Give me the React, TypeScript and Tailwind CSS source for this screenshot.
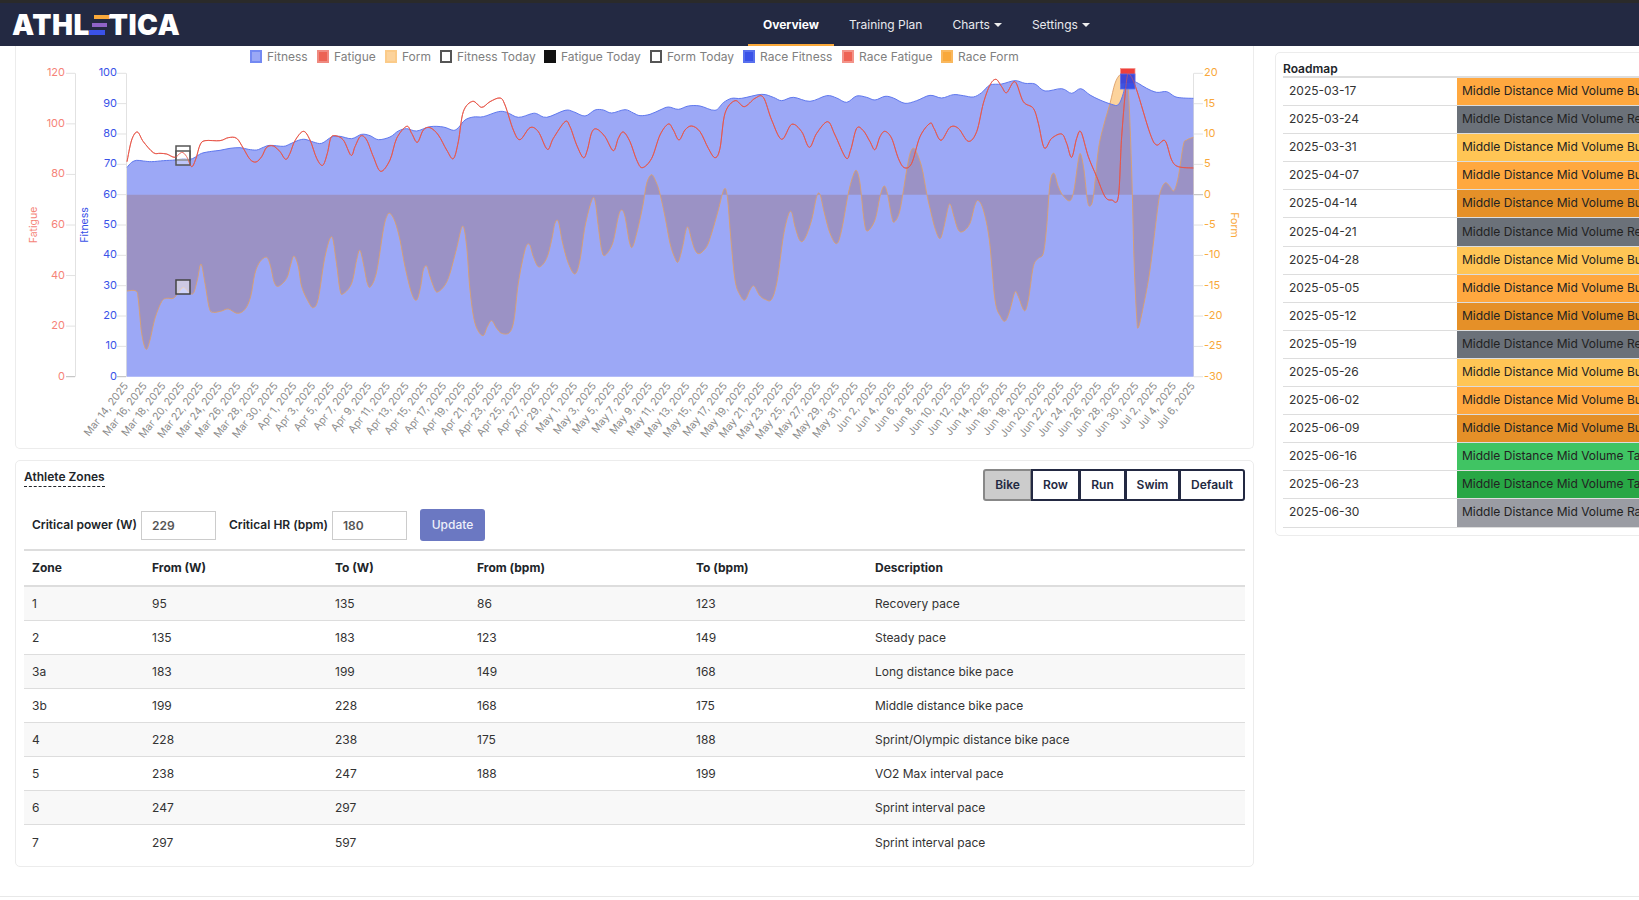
import React from 'react';

type Pt = [number, number];

const PLOT = { left: 126.8, right: 1193.4, top: 73.3, bottom: 376.7 };
const ZERO_Y = 194.7;

// traced per slice of the chart, 3x px from the slice origin
const fitnessSlices: [number, Pt[]][] = [
  [120, [[21,292],[35,277],[50,271],[70,273],[95,275],[130,272],[165,270],[190,266],[210,268],[225,262],[245,250],[275,244],[300,241],[330,235],[360,233],[385,238],[410,240],[430,232],[450,226],[490,229],[510,222],[535,211],[555,208],[580,216],[605,220],[635,201],[660,199],[695,206],[725,193],[750,197],[775,209],[810,201]]],
  [390, [[25,183],[50,176],[80,183],[120,170],[160,171],[190,181],[205,173],[225,150],[250,141],[280,140],[325,125],[350,127],[385,142],[425,131],[440,131],[470,142],[525,121],[550,125],[585,138],[615,120],[640,120],[665,129],[705,119],[730,129],[750,137],[780,133],[810,120]]],
  [660, [[25,111],[55,118],[85,108],[120,108],[165,121],[190,98],[215,85],[245,85],[305,73],[340,82],[365,92],[400,82],[450,94],[500,77],[530,84],[560,97],[590,78],[620,82],[645,90],[675,79],[700,84],[735,100],[770,92],[810,76]]],
  [930, [[35,84],[70,74],[100,77],[130,81],[155,68],[180,45],[215,42],[255,32],[285,40],[315,42],[345,63],[395,56],[425,70],[452,56],[480,75],[510,90],[545,103],[565,104],[580,70],[590,20],[600,28],[625,40],[650,55],[680,67],[710,65],[735,80],[760,84],[790,85]]],
];

const formSlices: [number, Pt[]][] = [
  [120, [[21,663],[48,663],[55,690],[65,790],[78,838],[90,810],[105,745],[125,695],[140,685],[160,685],[175,668],[190,652],[205,665],[220,670],[232,630],[243,582],[255,640],[268,715],[280,727],[305,723],[325,717],[352,730],[375,718],[392,680],[405,610],[420,575],[440,562],[452,590],[462,635],[475,649],[500,625],[512,585],[522,558],[535,590],[545,650],[565,695],[580,713],[595,685],[615,560],[635,500],[648,570],[660,660],[670,671],[695,640],[710,570],[720,541],[732,590],[742,640],[752,650],[770,605],[790,480],[800,440],[810,430]]],
  [390, [[15,455],[30,510],[45,590],[65,670],[80,690],[92,650],[100,600],[110,588],[120,620],[135,660],[145,665],[165,645],[180,610],[200,535],[218,468],[230,530],[240,660],[255,760],[278,797],[292,770],[305,752],[320,775],[335,790],[358,788],[372,750],[385,640],[405,540],[418,523],[430,560],[447,591],[470,565],[485,510],[495,460],[505,455],[518,520],[535,580],[555,612],[570,570],[585,470],[605,392],[615,392],[625,470],[635,540],[645,556],[668,520],[685,440],[695,420],[705,440],[718,515],[728,530],[745,470],[760,400],[770,340],[785,314],[800,340],[810,372]]],
  [660, [[15,440],[30,520],[45,565],[55,575],[68,530],[78,480],[85,473],[95,510],[105,540],[118,551],[140,530],[155,490],[175,420],[192,358],[202,380],[212,500],[225,630],[240,675],[255,690],[270,660],[282,648],[298,675],[315,688],[335,688],[352,630],[370,500],[385,435],[395,427],[405,470],[420,512],[435,505],[455,450],[470,380],[480,373],[492,425],[510,490],[530,521],[545,480],[565,370],[580,315],[590,302],[600,340],[612,450],[622,483],[645,450],[660,380],[672,348],[682,370],[695,440],[703,456],[720,420],[740,300],[752,245],[765,238],[785,290],[800,370],[810,415]]],
  [930, [[15,475],[30,506],[42,470],[55,410],[62,405],[72,440],[85,480],[100,484],[120,460],[135,405],[145,392],[160,420],[178,510],[195,690],[212,740],[226,753],[240,720],[255,666],[265,680],[283,722],[295,690],[310,590],[325,565],[340,550],[350,470],[360,340],[372,310],[385,350],[400,378],[420,392],[432,360],[445,270],[452,252],[462,300],[472,390],[480,408],[490,380],[505,240],[520,170],[540,100],[555,40],[570,14],[585,12],[595,60],[605,300],[612,570],[620,740],[625,773],[640,710],[660,600],[685,400],[695,355],[707,338],[720,350],[732,362],[745,320],[760,225],[770,210],[790,202]]],
];

const fatigueSlices: [number, Pt[]][] = [
  [120, [[21,275],[35,210],[52,186],[70,215],[100,248],[120,250],[140,252],[165,262],[185,247],[200,260],[215,290],[228,265],[240,225],[255,212],[300,212],[325,203],[350,205],[370,235],[390,268],[408,276],[425,260],[440,232],[460,228],[480,245],[497,268],[510,250],[525,212],[550,184],[570,210],[590,265],[608,286],[622,250],[632,205],[645,197],[670,210],[693,256],[705,230],[722,198],[740,210],[760,260],[782,304],[810,270]]],
  [390, [[20,205],[50,169],[65,190],[82,217],[100,180],[120,173],[145,195],[170,240],[190,266],[205,215],[220,125],[248,94],[275,112],[300,95],[330,84],[345,105],[370,180],[390,209],[420,173],[445,185],[472,238],[490,205],[525,155],[540,170],[560,225],[580,263],[592,240],[605,188],[620,177],[645,200],[670,242],[685,205],[700,186],[720,215],[740,270],[757,293],[785,265],[810,195]]],
  [660, [[25,162],[40,180],[57,210],[75,180],[95,168],[120,185],[145,235],[165,263],[180,235],[195,130],[225,92],[253,110],[285,85],[310,82],[335,150],[365,208],[395,163],[425,185],[448,232],[470,190],[503,155],[525,195],[558,264],[572,240],[590,175],[610,182],[630,215],[645,239],[660,200],[675,184],[695,205],[715,265],[733,293],[755,280],[780,200],[810,160]]],
  [930, [[12,175],[33,211],[60,172],[85,175],[115,214],[140,185],[160,100],[180,45],[198,28],[215,50],[230,68],[255,35],[280,95],[310,115],[325,160],[343,234],[365,205],[395,192],[410,220],[425,262],[440,205],[453,186],[475,260],[500,320],[525,380],[545,390],[565,380],[575,200],[590,30],[600,15],[620,60],[660,190],[680,225],[705,212],[725,270],[745,290],[790,294]]],
];

const flatten = (slices: [number, Pt[]][]): Pt[] =>
  slices.flatMap(([off, pts]) => pts.map(([x, y]): Pt => [off + x / 3, 70 + y / 3]));

const smooth = (pts: Pt[]) => {
  let d = `M${pts[0][0]},${pts[0][1]}`;
  for (let i = 0; i < pts.length - 1; i++) {
    const p0 = pts[Math.max(i - 1, 0)];
    const p1 = pts[i];
    const p2 = pts[i + 1];
    const p3 = pts[Math.min(i + 2, pts.length - 1)];
    const c1x = p1[0] + (p2[0] - p0[0]) / 6;
    const c1y = p1[1] + (p2[1] - p0[1]) / 6;
    const c2x = p2[0] - (p3[0] - p1[0]) / 6;
    const c2y = p2[1] - (p3[1] - p1[1]) / 6;
    d += ` C${c1x},${c1y} ${c2x},${c2y} ${p2[0]},${p2[1]}`;
  }
  return d;
};

const fitnessLine = smooth(flatten(fitnessSlices));
const formLine = smooth(flatten(formSlices));
const fatigueLine = smooth(flatten(fatigueSlices));

const dateLabels = Array.from({ length: 58 }, (_, i) => {
  const date = new Date(Date.UTC(2025, 2, 14 + i * 2));
  const month = date.toLocaleDateString('en-US', { month: 'short', timeZone: 'UTC' });
  return `${month} ${date.getUTCDate()}, 2025`;
});

const legend = [
  { label: 'Fitness', box: 'bg-[#9aa8f6] border-[#7389f2]', w: 'w-[67px]' },
  { label: 'Fatigue', box: 'bg-[#ec6354] border-[#ef8a80]', w: 'w-[68px]' },
  { label: 'Form', box: 'bg-[#fcd39c] border-[#fbcb89]', w: 'w-[55px]' },
  { label: 'Fitness Today', box: 'bg-white border-[#555555]', w: 'w-[104px]' },
  { label: 'Fatigue Today', box: 'bg-[#111111] border-[#111111]', w: 'w-[106px]' },
  { label: 'Form Today', box: 'bg-white border-[#555555]', w: 'w-[93px]' },
  { label: 'Race Fitness', box: 'bg-[#3a52e8] border-[#5870ee]', w: 'w-[99px]' },
  { label: 'Race Fatigue', box: 'bg-[#ee6355] border-[#f39389]', w: 'w-[99px]' },
  { label: 'Race Form', box: 'bg-[#f9a83a] border-[#f9b85e]', w: 'w-[77px]' },
];

const roadmap = [
  ['2025-03-17', 'Build 1', 'bg-[#ffa83f]'],
  ['2025-03-24', 'Recovery', 'bg-[#6b7179]'],
  ['2025-03-31', 'Build 2', 'bg-[#ffc555]'],
  ['2025-04-07', 'Build 2', 'bg-[#ffa83f]'],
  ['2025-04-14', 'Build 2', 'bg-[#e59028]'],
  ['2025-04-21', 'Recovery', 'bg-[#6b7179]'],
  ['2025-04-28', 'Build 3', 'bg-[#ffc555]'],
  ['2025-05-05', 'Build 3', 'bg-[#ffa83f]'],
  ['2025-05-12', 'Build 3', 'bg-[#e59028]'],
  ['2025-05-19', 'Recovery', 'bg-[#6b7179]'],
  ['2025-05-26', 'Build 4', 'bg-[#ffc555]'],
  ['2025-06-02', 'Build 4', 'bg-[#ffa83f]'],
  ['2025-06-09', 'Build 4', 'bg-[#e59028]'],
  ['2025-06-16', 'Taper 1', 'bg-[#40c463]'],
  ['2025-06-23', 'Taper 2', 'bg-[#28a745]'],
  ['2025-06-30', 'Race', 'bg-[#9a9ca3]'],
];

const zones = [
  ['1', '95', '135', '86', '123', 'Recovery pace'],
  ['2', '135', '183', '123', '149', 'Steady pace'],
  ['3a', '183', '199', '149', '168', 'Long distance bike pace'],
  ['3b', '199', '228', '168', '175', 'Middle distance bike pace'],
  ['4', '228', '238', '175', '188', 'Sprint/Olympic distance bike pace'],
  ['5', '238', '247', '188', '199', 'VO2 Max interval pace'],
  ['6', '247', '297', '', '', 'Sprint interval pace'],
  ['7', '297', '597', '', '', 'Sprint interval pace'],
];

const sports = [
  { label: 'Bike', w: 'w-[49px]', active: true },
  { label: 'Row', w: 'w-[49px]', active: false },
  { label: 'Run', w: 'w-[47px]', active: false },
  { label: 'Swim', w: 'w-[55px]', active: false },
  { label: 'Default', w: 'w-[66px]', active: false },
];

const Caret = () => (
  <span className="ml-1 inline-block w-0 h-0 border-x-[4px] border-x-transparent border-t-[4px] border-t-[#eeeeee] align-middle" />
);

const Logo = () => (
  <div className="flex items-center ml-[12px] h-[20px] text-white font-black text-[28px] leading-none tracking-[0.5px]">
    <span>ATHL</span>
    <svg width="21" height="20" viewBox="0 0 21 20" className="shrink-0 -mx-px">
      <rect x="5" y="0" width="16" height="4" fill="#f9a83a" />
      <rect x="3" y="8" width="15" height="4" fill="#8e63c8" />
      <rect x="0" y="15" width="16" height="5" fill="#3a52e8" />
    </svg>
    <span>TICA</span>
  </div>
);

const Chart = () => {
  const fy = (v: number) => PLOT.bottom - (v / 120) * (PLOT.bottom - PLOT.top);
  const py = (v: number) => PLOT.bottom - (v / 100) * (PLOT.bottom - PLOT.top);
  const oy = (v: number) => ZERO_Y - (v / 5) * ((PLOT.bottom - PLOT.top) / 10);
  const fatigueTicks = [0, 20, 40, 60, 80, 100, 120];
  const fitnessTicks = [0, 10, 20, 30, 40, 50, 60, 70, 80, 90, 100];
  const formTicks = [20, 15, 10, 5, 0, -5, -10, -15, -20, -25, -30];

  return (
    <svg viewBox="16 64 1237 384" width="1237" height="384" className="block" fontFamily="Inter, sans-serif">
      <line x1="75.5" x2="75.5" y1={PLOT.top} y2={PLOT.bottom} stroke="#e2e2e2" />
      <line x1="126.5" x2="126.5" y1={PLOT.top} y2={PLOT.bottom} stroke="#e2e2e2" />
      <line x1="1193.5" x2="1193.5" y1={PLOT.top} y2={PLOT.bottom} stroke="#e2e2e2" />
      {fatigueTicks.map(v => (
        <g key={v}>
          <line x1="66" x2="75" y1={fy(v)} y2={fy(v)} stroke={v === 0 ? '#bbbbbb' : '#e2e2e2'} />
          <text x="65" y={fy(v) + 3} textAnchor="end" fontSize="11" fill="#f58378">{v}</text>
        </g>
      ))}
      {fitnessTicks.map(v => (
        <g key={v}>
          <line x1="117" x2="126" y1={py(v)} y2={py(v)} stroke={v === 0 ? '#bbbbbb' : '#e2e2e2'} />
          <text x="117" y={py(v) + 3} textAnchor="end" fontSize="11" fill="#3a52e8">{v}</text>
        </g>
      ))}
      {formTicks.map(v => (
        <g key={v}>
          <line x1="1194" x2="1203" y1={oy(v)} y2={oy(v)} stroke={v === 0 ? '#bbbbbb' : '#e2e2e2'} />
          <text x="1204" y={oy(v) + 3} fontSize="11" fill="#f9a83a">{v}</text>
        </g>
      ))}
      <text transform="translate(37,225) rotate(-90)" textAnchor="middle" fontSize="10.5" fill="#f58378">Fatigue</text>
      <text transform="translate(88,225) rotate(-90)" textAnchor="middle" fontSize="10.5" fill="#3a52e8">Fitness</text>
      <text transform="translate(1231,225) rotate(90)" textAnchor="middle" fontSize="10.5" fill="#f9a83a">Form</text>

      <path d={`${formLine} L${PLOT.right},${ZERO_Y} L${PLOT.left},${ZERO_Y} Z`} fill="#f9a83a" fillOpacity="0.5" />
      <path d={`${fitnessLine} L${PLOT.right},${PLOT.bottom} L${PLOT.left},${PLOT.bottom} Z`} fill="#3a52ee" fillOpacity="0.5" />
      <path d={formLine} fill="none" stroke="#dca06c" strokeOpacity="0.9" strokeWidth="1" />
      <path d={fitnessLine} fill="none" stroke="#5f78ee" strokeWidth="1" />
      <path d={fatigueLine} fill="none" stroke="#e8574a" strokeWidth="1" />

      <rect x="176" y="146" width="14" height="14" fill="#ffffff" fillOpacity="0.35" stroke="#555555" strokeWidth="1.5" />
      <rect x="176" y="151" width="14" height="14" fill="#ffffff" fillOpacity="0.35" stroke="#555555" strokeWidth="1.5" />
      <rect x="176" y="280" width="14" height="14" fill="#ffffff" fillOpacity="0.5" stroke="#444444" strokeWidth="1.5" />

      <rect x="1120.5" y="68.5" width="14.5" height="15" fill="#ee3f3c" stroke="#f39389" strokeWidth="0.75" />
      <rect x="1120.5" y="74" width="14.5" height="15" fill="#2f49e6" fillOpacity="0.92" stroke="#5870ee" strokeWidth="0.75" />
      <path d={fatigueLine} fill="none" stroke="#e8574a" strokeOpacity="0.6" strokeWidth="1" />

      {dateLabels.map((label, i) => {
        const x = PLOT.left + i * ((PLOT.right - PLOT.left) / 57) + 2;
        return (
          <text key={label} transform={`translate(${x},386) rotate(-52)`} textAnchor="end" fontSize="10.5" fill="#8c8c8c">
            {label}
          </text>
        );
      })}
    </svg>
  );
};

export default function App() {
  return (
    <div className="h-screen overflow-hidden bg-white text-[#212529] font-['Inter',sans-serif]">
      <div className="h-[3px] bg-[#2a2a2a]" />
      <nav className="relative h-[43px] bg-[#232942] flex items-center">
        <Logo />
        <div className="absolute left-[748px] top-0 h-full flex text-[12px] pt-px text-[#e9e9ee]">
          <a className="w-[86px] h-full flex items-center justify-center pt-[2px] font-bold text-white border-b-2 border-[#f9a83a]">Overview</a>
          <a className="ml-[15px] flex items-center">Training Plan</a>
          <a className="ml-[30px] flex items-center">Charts<Caret /></a>
          <a className="ml-[30px] flex items-center">Settings<Caret /></a>
        </div>
      </nav>

      <div className="flex items-start pl-[15px]">
        <div className="w-[1239px] shrink-0">
          <section className="h-[403px] border border-t-0 border-[#ececec] rounded-b-[5px]">
            <div className="h-[18px] pt-[3px] pl-[234px] flex text-[12px] leading-[13px] text-[#808080]">
              {legend.map(item => (
                <div key={item.label} className={`flex items-center shrink-0 ${item.w}`}>
                  <span className={`w-[12px] h-[13px] border-2 mr-[5px] shrink-0 ${item.box}`} />
                  <span className="whitespace-nowrap">{item.label}</span>
                </div>
              ))}
            </div>
            <Chart />
          </section>

          <section className="mt-[11px] h-[407px] border border-[#ececec] rounded-[5px] px-[8px]">
            <div className="flex justify-between pt-[8px] h-[48px]">
              <h3 className="self-start text-[12px] leading-[16px] font-semibold text-[#212529] border-b border-dashed border-[#212529] pb-[1px]">Athlete Zones</h3>
              <div className="flex h-[32px] text-[12px] font-semibold text-[#232942]">
                {sports.map(sport => (
                  <button
                    key={sport.label}
                    className={`${sport.w} border-2 -ml-px first:ml-0 first:rounded-l-[3px] last:rounded-r-[3px] ${sport.active ? 'bg-[#cccccc] border-[#888888]' : 'bg-white border-[#232942]'}`}
                  >
                    {sport.label}
                  </button>
                ))}
              </div>
            </div>
            <div className="flex items-center h-[32px] mb-[8px] pl-[8px] text-[12px] font-semibold text-[#212529]">
              <label className="w-[109px] whitespace-nowrap">Critical power (W)</label>
              <input readOnly value="229" className="w-[75px] h-[29px] border border-[#cccccc] pl-[10px] text-[#555555] font-semibold outline-none" />
              <label className="ml-[13px] w-[103px] whitespace-nowrap">Critical HR (bpm)</label>
              <input readOnly value="180" className="w-[75px] h-[29px] border border-[#cccccc] pl-[10px] text-[#555555] font-semibold outline-none" />
              <button className="ml-[13px] w-[65px] h-[32px] rounded-[3px] bg-[#6b78c2] text-[#eef0fa] font-medium">Update</button>
            </div>
            <table className="w-full table-fixed border-t-2 border-[#dddddd] text-[12px] text-[#333333]">
              <colgroup>
                <col className="w-[120px]" />
                <col className="w-[183px]" />
                <col className="w-[142px]" />
                <col className="w-[219px]" />
                <col className="w-[179px]" />
                <col />
              </colgroup>
              <thead>
                <tr className="h-[36px] border-b-2 border-[#dddddd] text-left text-[#212529]">
                  {['Zone', 'From (W)', 'To (W)', 'From (bpm)', 'To (bpm)', 'Description'].map(h => (
                    <th key={h} className="px-[8px] font-bold">{h}</th>
                  ))}
                </tr>
              </thead>
              <tbody>
                {zones.map((row, i) => (
                  <tr key={row[0]} className={`h-[34.15px] ${i % 2 === 0 ? 'bg-[#f8f8f8]' : ''} ${i < zones.length - 1 ? 'border-b border-[#dddddd]' : ''}`}>
                    {row.map((cell, j) => (
                      <td key={j} className="px-[8px] pt-px">{cell}</td>
                    ))}
                  </tr>
                ))}
              </tbody>
            </table>
          </section>
        </div>

        <section className="ml-[21px] mt-[6px] w-[500px] shrink-0 h-[484px] border border-[#ececec] rounded-[5px] pl-[7px] pt-[8px]">
          <h3 className="h-[15px] text-[12px] leading-[16px] font-semibold text-[#212529]">Roadmap</h3>
          <div className="border-t-2 border-[#dddddd] text-[12px]">
            {roadmap.map(([date, phase, colour]) => (
              <div key={date} className="flex h-[28.1px] border-b border-[#dddddd]">
                <div className="w-[174px] pl-[6px] pb-px flex items-center text-[#333333]">{date}</div>
                <div className={`flex-1 pl-[5px] pb-px flex items-center whitespace-nowrap text-[#222222] ${colour}`}>Middle Distance Mid Volume {phase}</div>
              </div>
            ))}
          </div>
        </section>
      </div>

      <div className="mt-[29px] border-t border-[#e8e8e8]" />
    </div>
  );
}
